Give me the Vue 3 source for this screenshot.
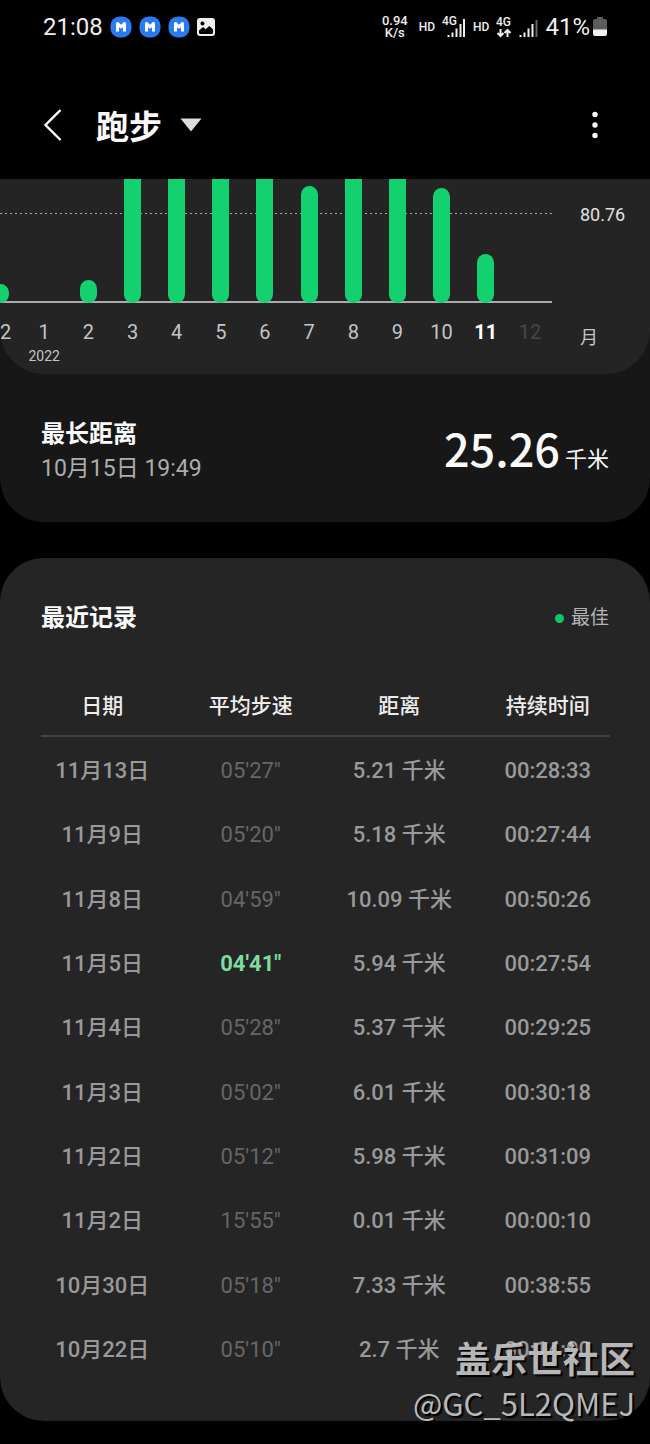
<template>
  <div class="screen" lang="zh-CN">
    <header class="top">
      <div class="status">
        <div class="status-side">
          <span class="clock">21:08</span>
          <svg v-for="n in 3" :key="n" width="22" height="22" viewBox="0 0 22 22">
            <rect x="0.5" y="0.5" width="21" height="21" rx="9" fill="#2a7af0" />
            <path
              d="M6 15.5V7.5Q6 6 7.5 6Q8.6 6 9.4 7.2L11 8.8L12.6 7.2Q13.4 6 14.5 6Q16 6 16 7.5V15.5H13V11.2L11 12.8L9 11.2V15.5Z"
              fill="#fff"
            />
          </svg>
          <svg width="18" height="18" viewBox="0 0 18 18">
            <rect width="18" height="18" rx="3" fill="#efefef" />
            <circle cx="5.5" cy="5.5" r="2" fill="#000" />
            <path d="M2 14.5V12.5L6.2 9L8.6 11.2L12.4 8L16 11.6V14.5Q16 16 14.5 16H3.5Q2 16 2 14.5Z" fill="#000" />
          </svg>
        </div>
        <div class="status-side">
          <div class="speed">
            <span>0.94</span>
            <span>K/s</span>
          </div>
          <span class="hd">HD</span>
          <svg class="signal" width="24" height="24" viewBox="0 0 24 24">
            <text x="0" y="10">4G</text>
            <path d="M6.5 20V22M10.5 17.5V22M14.5 13.5V22M18.5 9V22M22 4V22" stroke="#eee" stroke-width="2" />
          </svg>
          <span class="hd">HD</span>
          <svg class="signal" width="16" height="24" viewBox="0 0 16 24">
            <text x="0" y="11">4G</text>
            <path d="M4.5 14V21M1.5 18L4.5 21L7.5 18M11.5 22V15M8.5 18L11.5 15L14.5 18" fill="none" stroke="#eee" stroke-width="2" />
          </svg>
          <svg width="19" height="24" viewBox="0 0 19 24">
            <path d="M1.5 20V22M5.5 17.5V22M9.5 13.5V22M13.5 9V22" stroke="#eee" stroke-width="2" />
            <path d="M17.5 5V22" stroke="#666" stroke-width="2" />
          </svg>
          <div class="battery">
            <span class="percent">41%</span>
            <svg width="14" height="20" viewBox="0 0 14 20">
              <path d="M4 0H10V2H12Q14 2 14 4V13H0V4Q0 2 2 2H4Z" fill="#5c5c5c" />
              <path d="M0 12.5H14V17Q14 19 12 19H2Q0 19 0 17Z" fill="#f2f2f2" />
            </svg>
          </div>
        </div>
      </div>

      <nav class="appbar">
        <button class="icon-button" type="button" aria-label="返回">
          <svg width="20" height="34" viewBox="0 0 20 34">
            <path d="M17.5 2L2.5 17L17.5 32" fill="none" stroke="#fff" stroke-width="2.4" />
          </svg>
        </button>
        <button class="title" type="button">
          跑步
          <svg width="22" height="14" viewBox="0 0 22 14">
            <path d="M0.5 0.5H21.5L11 13.5Z" fill="#dcdcdc" />
          </svg>
        </button>
        <button class="icon-button more" type="button" aria-label="更多选项">
          <svg width="6" height="28" viewBox="0 0 6 28">
            <circle cx="3" cy="3.5" r="2.7" fill="#fff" />
            <circle cx="3" cy="14" r="2.7" fill="#fff" />
            <circle cx="3" cy="24.5" r="2.7" fill="#fff" />
          </svg>
        </button>
      </nav>
    </header>

    <main>
      <section class="summary">
        <div class="chart">
          <div class="plot">
            <div class="bars">
              <div class="slot" v-for="(m, i) of months" :key="i">
                <div v-if="m.height" class="bar" :style="{ height: m.height + 'px' }"></div>
              </div>
            </div>
            <div class="labels">
              <div class="label" :class="m.state" v-for="(m, i) of months" :key="i">
                {{ m.name }}
                <span v-if="m.year" class="year">{{ m.year }}</span>
              </div>
            </div>
          </div>
          <div class="axis">
            <span class="goal">80.76</span>
            <span class="unit">月</span>
          </div>
        </div>

        <div class="longest">
          <div>
            <h2>最长距离</h2>
            <p class="when">10月15日 19:49</p>
          </div>
          <p class="distance"><strong>25.26</strong><span>千米</span></p>
        </div>
      </section>

      <section class="records">
        <div class="records-head">
          <h2>最近记录</h2>
          <span class="legend">最佳</span>
        </div>
        <table>
          <thead>
            <tr>
              <th v-for="c of columns" :key="c" scope="col">{{ c }}</th>
            </tr>
          </thead>
          <tbody>
            <tr v-for="(r, i) of records" :key="i">
              <td>{{ r.date }}</td>
              <td class="pace" :class="{ best: r.best }">{{ r.pace }}</td>
              <td>{{ r.distance }} 千米</td>
              <td>{{ r.time }}</td>
            </tr>
          </tbody>
        </table>
      </section>
    </main>

    <div class="watermark">
      <span class="community">盖乐世社区</span>
      <span>@GC_5L2QMEJ</span>
    </div>
  </div>
</template>

<script setup>
const months = [
  { name: '12', height: 19 },
  { name: '1', height: 0, year: '2022' },
  { name: '2', height: 23 },
  { name: '3', height: 150 },
  { name: '4', height: 150 },
  { name: '5', height: 150 },
  { name: '6', height: 150 },
  { name: '7', height: 117 },
  { name: '8', height: 150 },
  { name: '9', height: 150 },
  { name: '10', height: 115 },
  { name: '11', height: 49, state: 'current' },
  { name: '12', height: 0, state: 'future' }
]

const columns = ['日期', '平均步速', '距离', '持续时间']

const records = [
  { date: '11月13日', pace: '05\'27"', distance: '5.21', time: '00:28:33' },
  { date: '11月9日', pace: '05\'20"', distance: '5.18', time: '00:27:44' },
  { date: '11月8日', pace: '04\'59"', distance: '10.09', time: '00:50:26' },
  { date: '11月5日', pace: '04\'41"', distance: '5.94', time: '00:27:54', best: true },
  { date: '11月4日', pace: '05\'28"', distance: '5.37', time: '00:29:25' },
  { date: '11月3日', pace: '05\'02"', distance: '6.01', time: '00:30:18' },
  { date: '11月2日', pace: '05\'12"', distance: '5.98', time: '00:31:09' },
  { date: '11月2日', pace: '15\'55"', distance: '0.01', time: '00:00:10' },
  { date: '10月30日', pace: '05\'18"', distance: '7.33', time: '00:38:55' },
  { date: '10月22日', pace: '05\'10"', distance: '2.7', time: '00:14:00' }
]
</script>

<style>
body {
  background: #000;
}
</style>

<style scoped>
.screen {
  position: relative;
  padding-bottom: 23px;
  background: #000;
  color: #fafafa;
  font-family: Roboto, 'Noto Sans CJK SC', sans-serif;
}
h2,
p {
  margin: 0;
}
h2 {
  font-size: 24px;
  font-weight: 700;
  line-height: 36px;
}
svg {
  display: block;
  flex: none;
}
button {
  padding: 0;
  border: 0;
  background: none;
  color: inherit;
  font-family: inherit;
  cursor: pointer;
}

.status {
  display: flex;
  justify-content: space-between;
  align-items: center;
  height: 54px;
  padding: 0 43px;
  color: #eee;
}
.status-side {
  display: flex;
  align-items: center;
  gap: 7px;
}
.clock,
.percent {
  font-size: 24px;
}
.speed {
  display: flex;
  flex-direction: column;
  align-items: center;
  margin-right: 4px;
  font-size: 13px;
  font-weight: 500;
  line-height: 12px;
}
.hd {
  font-size: 12px;
  font-weight: 500;
}
.battery {
  display: flex;
  align-items: center;
  gap: 3px;
}
.signal text {
  fill: #eee;
  font-size: 12px;
  font-weight: 500;
}

.appbar {
  display: flex;
  align-items: center;
  height: 108px;
  margin-top: 17px;
  padding: 0 52px 0 43px;
}
.title {
  display: flex;
  align-items: center;
  gap: 18px;
  margin-left: 33px;
  font-size: 33px;
  font-weight: 700;
}
.more {
  margin-left: auto;
}

.summary {
  border-radius: 0 0 44px 44px;
  background: #171717;
}
.chart {
  display: flex;
  height: 195px;
  overflow: hidden;
  border-radius: 0 0 44px 44px;
  background: #242424;
}
.plot {
  flex: 1;
  min-width: 0;
  overflow: hidden;
}
.bars {
  display: flex;
  justify-content: flex-end;
  align-items: flex-end;
  height: 124px;
  overflow: hidden;
  background:
    linear-gradient(#aaa, #aaa) 0 100% / 100% 2px no-repeat,
    repeating-linear-gradient(90deg, #aaa 0 2px, transparent 2px 5px) 0 34px / 100% 1px no-repeat;
}
.slot,
.label {
  flex: 0 0 8%;
}
.bar {
  width: 17px;
  margin: 0 auto;
  border-radius: 9px;
  background: #13d16e;
}
.labels {
  display: flex;
  justify-content: flex-end;
  margin-top: 17px;
}
.label {
  color: #c4c4c4;
  font-size: 20px;
  line-height: 24px;
  text-align: center;
}
.year {
  display: block;
  font-size: 14px;
}
.current {
  color: #fff;
  font-weight: 700;
}
.future {
  color: #484848;
}
.axis {
  display: flex;
  flex-direction: column;
  justify-content: space-between;
  width: 98px;
  box-sizing: border-box;
  padding: 24px 0 24px 28px;
  color: #e0e0e0;
  font-size: 18px;
  line-height: 24px;
}
.unit {
  color: #c4c4c4;
}
.longest {
  display: flex;
  justify-content: space-between;
  align-items: flex-start;
  padding: 42px 41px 37px;
}
.when {
  color: #adadad;
  font-size: 23px;
  line-height: 33px;
}
.distance {
  display: flex;
  align-items: baseline;
  gap: 5px;
  font-size: 22px;
  line-height: 32px;
}
.distance strong {
  font-family: 'Noto Sans CJK SC', sans-serif;
  font-size: 45px;
  font-weight: 500;
  line-height: 64px;
}

.records {
  margin-top: 36px;
  padding: 42px 28px 39px;
  border-radius: 44px;
  background: #252525;
}
.records-head {
  display: flex;
  justify-content: space-between;
  align-items: center;
  padding: 0 13px;
  margin-bottom: 38px;
}
.legend {
  display: flex;
  align-items: center;
  gap: 7px;
  color: #b4b4b4;
  font-size: 19px;
  line-height: 24px;
}
.legend::before {
  content: '';
  width: 9px;
  height: 9px;
  border-radius: 50%;
  background: #10c568;
}
table {
  width: 100%;
  table-layout: fixed;
  border-collapse: collapse;
  text-align: center;
}
thead {
  background: linear-gradient(#424242, #424242) center 61px / calc(100% - 26px) 2px no-repeat;
}
th {
  padding: 0;
  color: #ededed;
  font-size: 21px;
  font-weight: 500;
  line-height: 65px;
}
td {
  padding: 0;
  color: #999;
  font-size: 22px;
  font-weight: 500;
  line-height: 64px;
}
tr:nth-child(3n) td {
  line-height: 65px;
}
.pace {
  color: #666;
  font-weight: 400;
}
.best {
  color: #7ddb9f;
  font-weight: 700;
}

.watermark {
  position: absolute;
  right: 15px;
  bottom: 19px;
  display: flex;
  flex-direction: column;
  align-items: flex-end;
  color: rgba(200, 200, 200, 0.92);
  font-family: 'Noto Sans CJK SC', sans-serif;
  font-size: 31px;
  font-weight: 400;
  line-height: 44px;
  text-shadow: 2px 2px 1px #000;
  pointer-events: none;
}
.community {
  font-size: 36px;
  font-weight: 700;
  line-height: 48px;
}
</style>
